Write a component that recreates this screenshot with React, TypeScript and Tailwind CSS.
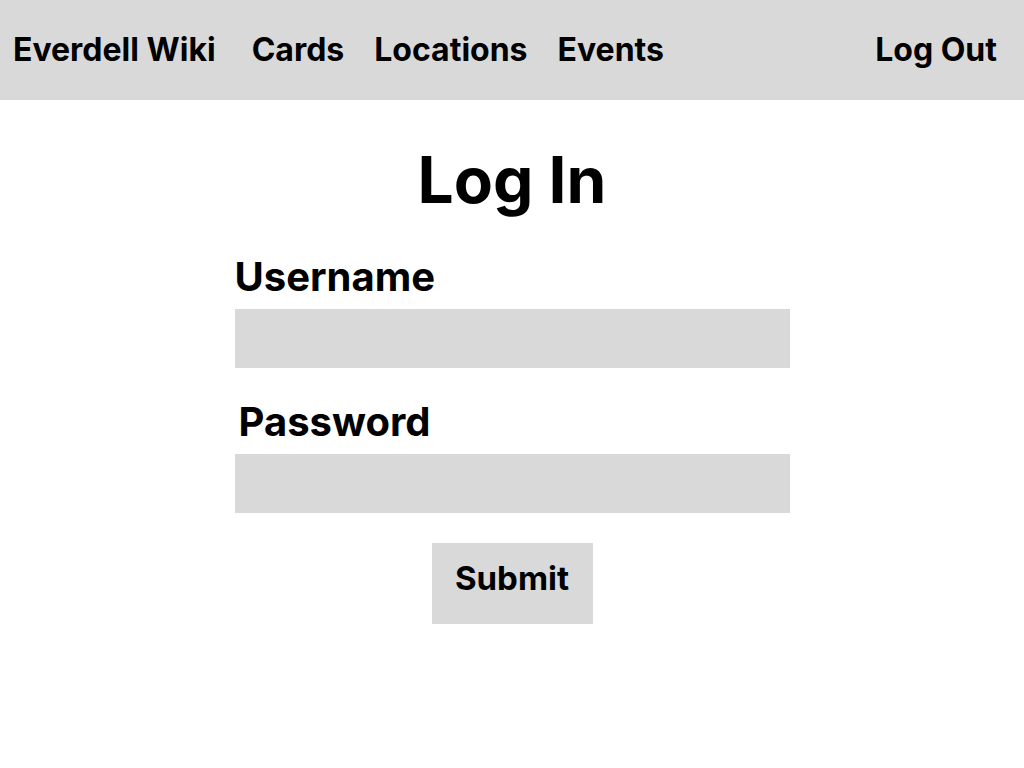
import React from 'react';

export default function App() {
  return (
    <div className="min-h-screen bg-white text-black font-['Inter',sans-serif]">
      {/* top bar */}
      <nav className="h-[100px] bg-[#d9d9d9] flex items-center pl-[13px] pr-[27px]">
        <a className="text-[32px] font-bold">Everdell Wiki</a>
        <a className="ml-[36px] text-[32px] font-bold">Cards</a>
        <a className="ml-[30px] text-[32px] font-bold">Locations</a>
        <a className="ml-[30px] text-[32px] font-bold">Events</a>
        <a className="ml-auto text-[32px] font-bold">Log Out</a>
      </nav>

      <main className="flex flex-col items-center">
        <h1 className="mt-[38px] text-[64px] font-bold leading-none h-[84px] flex items-center">Log In</h1>
        <form className="w-[555px] mt-[35px] flex flex-col">
          <label className="text-[40px] font-bold leading-none">Username</label>
          <input className="mt-[12px] h-[59px] bg-[#d9d9d9] outline-none px-3" />
          <label className="mt-[34px] ml-[4px] text-[40px] font-bold leading-none">Password</label>
          <input type="password" className="mt-[12px] h-[59px] bg-[#d9d9d9] outline-none px-3" />
          <button
            type="button"
            className="self-center mt-[30px] w-[161px] h-[81px] pb-[9px] bg-[#d9d9d9] text-[33px] font-bold flex items-center justify-center"
          >
            Submit
          </button>
        </form>
      </main>
    </div>
  );
}
